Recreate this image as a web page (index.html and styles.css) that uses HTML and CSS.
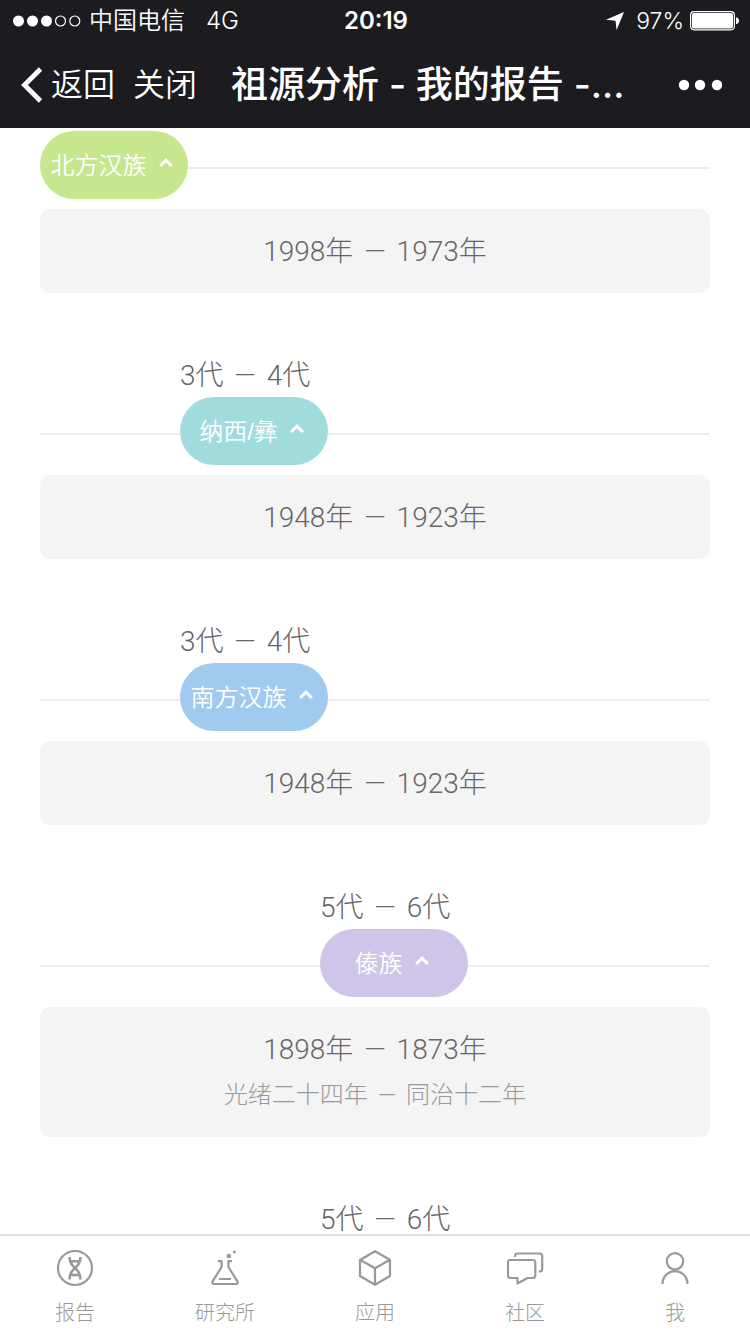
FILE: index.html
```html
<!DOCTYPE html>
<html lang="zh-CN">
<head>
<meta charset="utf-8">
<meta name="viewport" content="width=device-width, initial-scale=1">
<title>祖源分析 - 我的报告</title>
<link rel="stylesheet" href="styles.css">
</head>
<body>
<header class="top">
  <div class="status">
    <div class="status-left">
      <svg class="signal" width="68" height="12" viewBox="0 0 68 12" aria-hidden="true"><g fill="#fff"><circle cx="5.5" cy="6" r="5.5"/><circle cx="19.5" cy="6" r="5.5"/><circle cx="33.5" cy="6" r="5.5"/></g><g fill="none" stroke="#fff" stroke-width="1.2"><circle cx="47.5" cy="6" r="5"/><circle cx="61.8" cy="6" r="5"/></g></svg>
      <span class="carrier">中国电信</span>
      <span class="network">4G</span>
    </div>
    <span class="time">20:19</span>
    <div class="status-right">
      <svg class="locate" width="20" height="20" viewBox="0 0 20 20" aria-hidden="true"><path d="M19 1 L1 8.8 L10.5 9.8 L11.6 19 Z" fill="#fff"/></svg>
      <span class="charge">97%</span>
      <svg class="battery" width="49" height="20" viewBox="0 0 49 20" aria-hidden="true"><rect x=".6" y=".6" width="43.8" height="18.2" rx="3.5" fill="none" stroke="#fff" stroke-width="1.2"/><rect x="2" y="2" width="41" height="15.4" rx="2" fill="#fff"/><path d="M46 6.2 Q49 7 49 9.8 Q49 12.500 46 13.300Z" fill="#fff"/></svg>
    </div>
  </div>
  <nav class="nav">
    <button class="nav-btn back" type="button"><svg width="22" height="36" viewBox="0 0 22 36" aria-hidden="true"><path d="M19.500 2 L3.500 18 L19.500 34" fill="none" stroke="#fff" stroke-width="4.800"/></svg>返回</button>
    <button class="nav-btn" type="button">关闭</button>
    <h1 class="title">祖源分析 - 我的报告 -...</h1>
    <button class="nav-btn more" type="button" aria-label="更多"><svg width="44" height="12" viewBox="0 0 44 12" aria-hidden="true"><g fill="#fff"><circle cx="6" cy="6" r="5.200"/><circle cx="22" cy="6" r="5.200"/><circle cx="39" cy="6" r="5.200"/></g></svg></button>
  </nav>
</header>

<main class="timeline">
  <section class="entry">
    <div class="axis"><button class="pill green" type="button">北方汉族<svg class="caret" width="14" height="10" viewBox="0 0 14 10" aria-hidden="true"><path d="M1.200 8 L7 2.200 L12.800 8"/></svg></button></div>
    <div class="card"><p class="years">1998年 <span class="dash">—</span> 1973年</p></div>
  </section>
  <section class="entry step-1">
    <h2 class="generation">3代 <span class="dash">—</span> 4代</h2>
    <div class="axis"><button class="pill teal" type="button">纳西/彝<svg class="caret" width="14" height="10" viewBox="0 0 14 10" aria-hidden="true"><path d="M1.200 8 L7 2.200 L12.800 8"/></svg></button></div>
    <div class="card"><p class="years">1948年 <span class="dash">—</span> 1923年</p></div>
  </section>
  <section class="entry step-1">
    <h2 class="generation">3代 <span class="dash">—</span> 4代</h2>
    <div class="axis"><button class="pill blue" type="button">南方汉族<svg class="caret" width="14" height="10" viewBox="0 0 14 10" aria-hidden="true"><path d="M1.200 8 L7 2.200 L12.800 8"/></svg></button></div>
    <div class="card"><p class="years">1948年 <span class="dash">—</span> 1923年</p></div>
  </section>
  <section class="entry step-2">
    <h2 class="generation">5代 <span class="dash">—</span> 6代</h2>
    <div class="axis"><button class="pill purple" type="button">傣族<svg class="caret" width="14" height="10" viewBox="0 0 14 10" aria-hidden="true"><path d="M1.200 8 L7 2.200 L12.800 8"/></svg></button></div>
    <div class="card"><p class="years">1898年 <span class="dash">—</span> 1873年</p><p class="era">光绪二十四年 <span class="dash">—</span> 同治十二年</p></div>
  </section>
  <section class="entry step-2">
    <h2 class="generation">5代 <span class="dash">—</span> 6代</h2>
  </section>
</main>

<nav class="tabs">
  <a class="tab" href="#report"><svg width="40" height="40" viewBox="0 0 40 40" aria-hidden="true"><circle cx="20" cy="20" r="17"/><path class="helix" d="M14.500 9 C14.500 15 17 17.500 20 20 C23 22.500 25.500 25 25.500 31.500 M25.500 9 C25.500 15 23 17.500 20 20 C17 22.500 14.500 25 14.500 31.500 M15 13.300 H25 M15 27 H25"/></svg>报告</a>
  <a class="tab" href="#lab"><svg width="40" height="40" viewBox="0 0 40 40" aria-hidden="true"><path d="M13 13.200 H16.600 V19 L7.600 33.300 Q6.500 36 9 36 H31 Q33.500 36 32.400 33.300 L23.400 19 V13.200 H27 M14 31 H26"/><circle class="solid" cx="23.800" cy="8" r="2.300"/><circle class="solid" cx="29.400" cy="4" r="1.500"/></svg>研究所</a>
  <a class="tab" href="#apps"><svg width="40" height="40" viewBox="0 0 40 40" aria-hidden="true"><path d="M20 3.200 L34.500 11.500 Q35 12 35 13 V28 L20 36.800 L5 28 V12 Z M5.500 12 L20 20.300 L34.500 12 M20 20.300 V36.500"/></svg>应用</a>
  <a class="tab" href="#community"><svg width="40" height="40" viewBox="0 0 40 40" aria-hidden="true"><path d="M5.500 12 H27.800 Q30.300 12 30.300 14.500 V27.500 Q30.300 30 27.800 30 H22.500 L12.500 35.500 V30 H5.500 Q3 30 3 27.500 V14.500 Q3 12 5.500 12 Z M10 9 V8 Q10 5.500 12.500 5.500 H34.700 Q37.200 5.500 37.200 8 V21 Q37.200 23.500 34 23.700"/></svg>社区</a>
  <a class="tab" href="#me"><svg width="40" height="40" viewBox="0 0 40 40" aria-hidden="true"><circle cx="20" cy="13.300" r="8.200"/><path d="M7.600 36 V34 A12.500 12.400 0 0 1 32.400 34 V36"/></svg>我</a>
</nav>
</body>
</html>
```
FILE: styles.css
```css
* {
  box-sizing: border-box;
}

body {
  margin: 0;
  height: 100vh;
  display: flex;
  flex-direction: column;
  background: #fff;
  color: #666;
  font-family: Roboto, "Noto Sans CJK SC", sans-serif;
  font-weight: 300;
}

button {
  border: 0;
  padding: 0;
  background: none;
  color: inherit;
  font: inherit;
}

h1,
h2,
p {
  margin: 0;
  font-weight: inherit;
}

svg {
  display: block;
  flex: none;
}

.top {
  flex: none;
  background: #1c1b20;
  color: #fff;
  font-family: Inter, "Noto Sans CJK SC", sans-serif;
  font-weight: 350;
}

.status {
  display: grid;
  grid-template-columns: 1fr auto 1fr;
  align-items: center;
  height: 42px;
  padding: 0 11px 0 13px;
  font-size: 24px;
  line-height: 42px;
}

.status-left,
.status-right {
  display: flex;
  align-items: center;
}

.status-right {
  justify-content: flex-end;
}

.carrier {
  margin: 0 21px 0 8px;
}

.charge {
  font-size: 23px;
}

.locate {
  margin-right: 11px;
}

.battery {
  margin-left: 6px;
}

.time {
  font-weight: 600;
}

.nav {
  display: flex;
  align-items: center;
  height: 86px;
  padding: 0 28px 0 21px;
}

.nav-btn {
  display: flex;
  align-items: center;
  gap: 8px;
  font-size: 32px;
  line-height: 48px;
}

.back {
  margin-right: 18px;
}

.title {
  flex: 1;
  margin-left: 34px;
  font-size: 37px;
  font-weight: 500;
  line-height: 56px;
  white-space: nowrap;
}

.timeline {
  flex: 1;
  min-height: 0;
  overflow: hidden;
  padding: 3px 40px 0;
}

.entry {
  margin-bottom: 60px;
}

.generation {
  padding-top: 2px;
  font-size: 28px;
  line-height: 42px;
}

.step-1 .generation,
.step-1 .axis {
  padding-left: 140px;
}

.step-2 .generation,
.step-2 .axis {
  padding-left: 280px;
}

.dash {
  margin: 0 4px;
}

.axis {
  margin-bottom: 10px;
  background: linear-gradient(#ededed, #ededed) 0 36px / 100% 2px no-repeat;
}

.pill {
  display: flex;
  align-items: center;
  justify-content: center;
  gap: 12px;
  width: 148px;
  height: 68px;
  padding: 0 5px 4px 0;
  border-radius: 34px;
  color: #fff;
  font-family: "Liberation Sans", "Noto Sans CJK SC", sans-serif;
  font-size: 24px;
  font-weight: 350;
}

.green {
  background: #c7e78f;
}

.teal {
  background: #a1dcdd;
}

.blue {
  background: #a0cbee;
}

.purple {
  background: #cec5e8;
}

.caret {
  fill: none;
  stroke: #fff;
  stroke-width: 3;
}

.card {
  padding: 21px 20px 19px;
  border-radius: 10px;
  background: #f4f4f4;
  text-align: center;
}

.years {
  font-size: 28px;
  line-height: 44px;
}

.era {
  color: #999;
  font-size: 24px;
  line-height: 46px;
}

.tabs {
  flex: none;
  display: flex;
  height: 100px;
  border-top: 2px solid #e2e2e2;
  background: #fff;
}

.tab {
  flex: 1;
  display: flex;
  flex-direction: column;
  align-items: center;
  gap: 10px;
  padding-top: 12px;
  color: #999;
  font-size: 20px;
  line-height: 30px;
  text-decoration: none;
}

.tab svg {
  fill: none;
  stroke: #999;
  stroke-width: 2.2;
  stroke-linejoin: round;
}

.tab .helix {
  stroke-width: 2.6;
}

.tab .solid {
  fill: #999;
  stroke: none;
}
```
